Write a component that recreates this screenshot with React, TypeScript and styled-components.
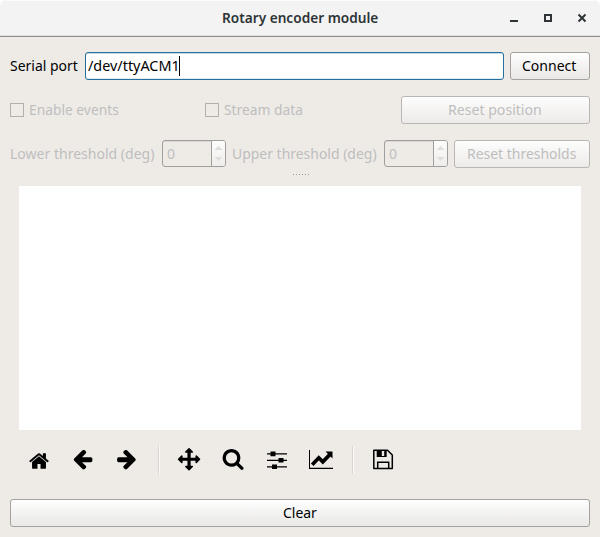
import React from 'react';
import styled, { createGlobalStyle } from 'styled-components';

const GlobalStyle = createGlobalStyle`
  *, *::before { box-sizing: border-box; }
  body { margin: 0; background: #fff; }
`;

const Window = styled.div`
  width: 600px;
  height: 537px;
  display: flex;
  flex-direction: column;
  background: #eeebe7;
  border-radius: 7px 7px 0 0;
  overflow: hidden;
  font-family: 'Noto Sans', sans-serif;
  font-size: 15px;
  color: #000;
`;

const TitleBar = styled.header`
  height: 37px;
  flex: none;
  display: grid;
  grid-template-columns: 100px 1fr 100px;
  align-items: center;
  background: #f3f3f3;
  border-top: 1px solid #fbfbfb;
  border-bottom: 1px solid #8b8e8b;
  box-shadow: inset 0 -1px #dededd;
`;

const Label = styled.span<{ $w: number; $sx?: number; $disabled?: boolean; $bold?: boolean }>`
  display: block;
  width: ${p => p.$w}px;
  line-height: 20px;
  margin-top: -2px;
  white-space: nowrap;
  transform: scaleX(${p => p.$sx ?? 0.93});
  transform-origin: left center;
  color: ${p => (p.$disabled ? '#bebebe' : p.$bold ? '#2e3436' : '#000')};
  font-weight: ${p => (p.$bold ? 600 : 400)};
`;

const Title = styled.div`
  grid-column: 2;
  display: flex;
  justify-content: center;
  padding-bottom: 2px;
`;

const WindowButtons = styled.div`
  display: flex;
  padding-left: 8px;
  padding-bottom: 4px;
  gap: 22px;
  svg { display: block; }
`;

const Body = styled.main`
  flex: 1;
  display: flex;
  flex-direction: column;
  padding: 15px 10px 10px;
`;

const Row = styled.div<{ $mb?: number }>`
  display: flex;
  align-items: center;
  height: 28px;
  flex: none;
  margin-bottom: ${p => p.$mb ?? 0}px;
`;

const Button = styled.button<{ $w?: number }>`
  width: ${p => (p.$w ? `${p.$w}px` : '100%')};
  height: 28px;
  flex: none;
  display: flex;
  justify-content: center;
  align-items: center;
  padding: 0;
  font: inherit;
  border: 1px solid #a5a19e;
  border-radius: 3px;
  background: linear-gradient(#fefefe, #e9e8e6);
  &:disabled { border-color: #bab6b3; background: linear-gradient(#fdfdfd, #edebe9); }
`;

const Field = styled.div`
  width: 419px;
  height: 28px;
  margin: 0 6px 0 8px;
  padding: 0 2px;
  display: flex;
  align-items: center;
  border: 1px solid #256f9f;
  border-radius: 3px;
  background: #fff;
  box-shadow: inset 0 1px #c5dae7, inset 0 -1px #e3edf4;
`;

const Caret = styled.i`
  width: 1px;
  height: 20px;
  background: #000;
`;

const CheckOption = styled.div<{ $w: number }>`
  display: flex;
  align-items: center;
  gap: 5px;
  width: ${p => p.$w}px;
  &::before {
    content: '';
    width: 14px;
    height: 14px;
    border: 1px solid #b3afab;
  }
`;

const SpinBox = styled.div<{ $mr: number }>`
  width: 64px;
  height: 27px;
  margin: 0 ${p => p.$mr}px 1px 7px;
  padding-left: 4px;
  display: flex;
  align-items: center;
  justify-content: space-between;
  border: 1px solid #a19e9b;
  border-radius: 3px;
  box-shadow: inset 0 1px #dad7d4;
`;

const Stepper = styled.div`
  width: 14px;
  height: 25px;
  border-left: 1px solid #a19e9b;
  border-radius: 0 2px 2px 0;
  background: linear-gradient(#fdfdfd, #efedeb);
  svg { display: block; }
`;

const Splitter = styled.div`
  height: 18px;
  flex: none;
  display: flex;
  justify-content: center;
  gap: 2px;
  padding-top: 6px;
  padding-left: 1px;
  i { width: 1px; height: 1px; background: #9c9995; }
`;

const Canvas = styled.section`
  height: 244px;
  flex: none;
  margin: 0 9px;
  background: #fff;
`;

const Toolbar = styled.nav`
  display: flex;
  height: 28px;
  flex: none;
  margin: 16px 0 25px 7px;
`;

const Tool = styled.div`
  width: 44px;
  display: flex;
  align-items: center;
  justify-content: center;
  svg { display: block; overflow: visible; }
`;

const Separator = styled.div`
  width: 2px;
  margin: 0 7px 0 9px;
  background: linear-gradient(90deg, #d8d5d1 50%, #fbfaf9 50%);
`;

const glyph = {
  home: 'M1472 992v480q0 26-19 45t-45 19h-384v-384h-256v384h-384q-26 0-45-19t-19-45v-480q0-1 .5-3t.5-3l575-474 575 474q1 2 1 6zm223-69l-62 74q-8 9-21 11h-3q-13 0-21-7l-692-577-692 577q-12 8-24 7-13-2-21-11l-62-74q-8-10-7-23.5t11-21.5l719-599q32-26 76-26t76 26l244 204v-195q0-14 9-23t23-9h192q14 0 23 9t9 23v408l219 182q10 8 11 21.5t-7 23.5z',
  back: 'M1536 896v128q0 53-32.5 90.5t-84.5 37.5h-704l293 294q38 36 38 90t-38 90l-75 76q-37 37-90 37-52 0-91-37l-651-652q-37-37-37-90 0-52 37-91l651-650q38-38 91-38 52 0 90 38l75 74q38 38 38 91t-38 91l-293 293h704q52 0 84.5 37.5t32.5 90.5z',
  forward: 'M1600 960q0 54-37 91l-651 651q-39 37-91 37-51 0-90-37l-75-75q-38-38-38-91t38-91l293-293h-704q-52 0-84.5-37.5t-32.5-90.5v-128q0-53 32.5-90.5t84.5-37.5h704l-293-294q-38-36-38-90t38-90l75-75q38-38 90-38 53 0 91 38l651 651q37 35 37 90z',
  move: 'M1792 896q0 26-19 45l-256 256q-19 19-45 19t-45-19-19-45v-128h-384v384h128q26 0 45 19t19 45-19 45l-256 256q-19 19-45 19t-45-19l-256-256q-19-19-19-45t19-45 45-19h128v-384h-384v128q0 26-19 45t-45 19-45-19l-256-256q-19-19-19-45t19-45l256-256q19-19 45-19t45 19 19 45v128h384v-384h-128q-26 0-45-19t-19-45 19-45l256-256q19-19 45-19t45 19l256 256q19 19 19 45t-19 45-45 19h-128v384h384v-128q0-26 19-45t45-19 45 19l256 256q19 19 19 45z',
  zoom: 'M1216 832q0-185-131.5-316.5t-316.5-131.5-316.5 131.5-131.5 316.5 131.5 316.5 316.5 131.5 316.5-131.5 131.5-316.5zm512 832q0 52-38 90t-90 38q-54 0-90-38l-343-342q-179 124-399 124-143 0-273.5-55.5t-225-150-150-225-55.5-273.5 55.5-273.5 150-225 225-150 273.5-55.5 273.5 55.5 225 150 150 225 55.5 273.5q0 220-124 399l343 343q37 37 37 90z',
};

const Glyph = ({ d, x, y, size }: { d: string; x: number; y: number; size: number }) => (
  <Tool>
    <svg width="24" height="24" viewBox="0 0 24 24">
      <path d={d} transform={`translate(${x} ${y}) scale(${size / 1792})`} />
    </svg>
  </Tool>
);

const Spin = ({ mr }: { mr: number }) => (
  <SpinBox $mr={mr}>
    <Label $w={9} $disabled>0</Label>
    <Stepper>
      <svg width="13" height="25" viewBox="0 0 13 25" fill="#dfddda">
        <path d="M2.5 9 6.5 5l4 4zM2.5 16h8l-4 4z" />
      </svg>
    </Stepper>
  </SpinBox>
);

export default function App() {
  return (
    <>
      <GlobalStyle />
      <Window>
        <TitleBar>
          <Title><Label $w={156} $sx={0.91} $bold>Rotary encoder module</Label></Title>
          <WindowButtons>
            <svg width="12" height="12"><path d="M2 9h8v2H2z" fill="#2e3436" /></svg>
            <svg width="12" height="12"><path d="M3 4h6v6H3z" fill="none" stroke="#2e3436" strokeWidth="2" /></svg>
            <svg width="12" height="12"><path d="m2.5 3.5 7 7m0-7-7 7" stroke="#2e3436" strokeWidth="2" /></svg>
          </WindowButtons>
        </TitleBar>
        <Body>
          <Row $mb={16}>
            <Label $w={67}>Serial port</Label>
            <Field><Label $w={91} $sx={0.96}>/dev/ttyACM1</Label><Caret /></Field>
            <Button $w={80}><Label $w={56} $sx={0.935}>Connect</Label></Button>
          </Row>
          <Row $mb={16}>
            <CheckOption $w={195}><Label $w={90} $sx={0.92} $disabled>Enable events</Label></CheckOption>
            <CheckOption $w={196}><Label $w={79} $sx={0.92} $disabled>Stream data</Label></CheckOption>
            <Button $w={189} disabled><Label $w={95} $sx={0.94} $disabled>Reset position</Label></Button>
          </Row>
          <Row>
            <Label $w={145} $sx={0.935} $disabled>Lower threshold (deg)</Label>
            <Spin mr={6} />
            <Label $w={145} $sx={0.93} $disabled>Upper threshold (deg)</Label>
            <Spin mr={6} />
            <Button $w={136} disabled><Label $w={111} $sx={0.93} $disabled>Reset thresholds</Label></Button>
          </Row>
          <Splitter><i /><i /><i /><i /><i /><i /></Splitter>
          <Canvas />
          <Toolbar>
            <Glyph d={glyph.home} x={1.2} y={2.2} size={21.6} />
            <Glyph d={glyph.back} x={2} y={-0.4} size={22.6} />
            <Glyph d={glyph.forward} x={0.5} y={-0.4} size={22.6} />
            <Separator />
            <Glyph d={glyph.move} x={0.8} y={0} size={22.5} />
            <Glyph d={glyph.zoom} x={0.8} y={-0.6} size={22.6} />
            <Tool>
              <svg width="24" height="24">
                <path d="M2 5.2h20v1.3H2zM2 11.7h20v1.3H2zM2 18.2h20v1.3H2zM5.5 3.6h5v4.6h-5zM13.5 10h5v4.6h-5zM7 16.5h5v4.6H7z" />
              </svg>
            </Tool>
            <Tool>
              <svg width="24" height="24">
                <path d="M0 2h1v17.8h23V21H0z" />
                <path d="m3.2 16.8 6.6-7 4 4 7-7.2" fill="none" stroke="#000" strokeWidth="3.7" />
                <path d="M16.5 3.5h7v7z" />
              </svg>
            </Tool>
            <Separator />
            <Tool>
              <svg width="24" height="24">
                <path d="M2.8 2.2h13.7l4.8 4.8v13.5H2.8z" fill="none" stroke="#000" strokeWidth="1.5" strokeLinejoin="round" />
                <path d="M6.3 2.5h8.7v6H6.3z" fill="none" stroke="#000" strokeWidth="1.2" />
                <path d="M6 2.5h4.8v6H6zM13.2 3h2v5h-2z" />
                <path d="M6.7 20.5v-6.3h11v6.3" fill="none" stroke="#000" strokeWidth="1.5" />
              </svg>
            </Tool>
          </Toolbar>
          <Button><Label $w={35}>Clear</Label></Button>
        </Body>
      </Window>
    </>
  );
}
